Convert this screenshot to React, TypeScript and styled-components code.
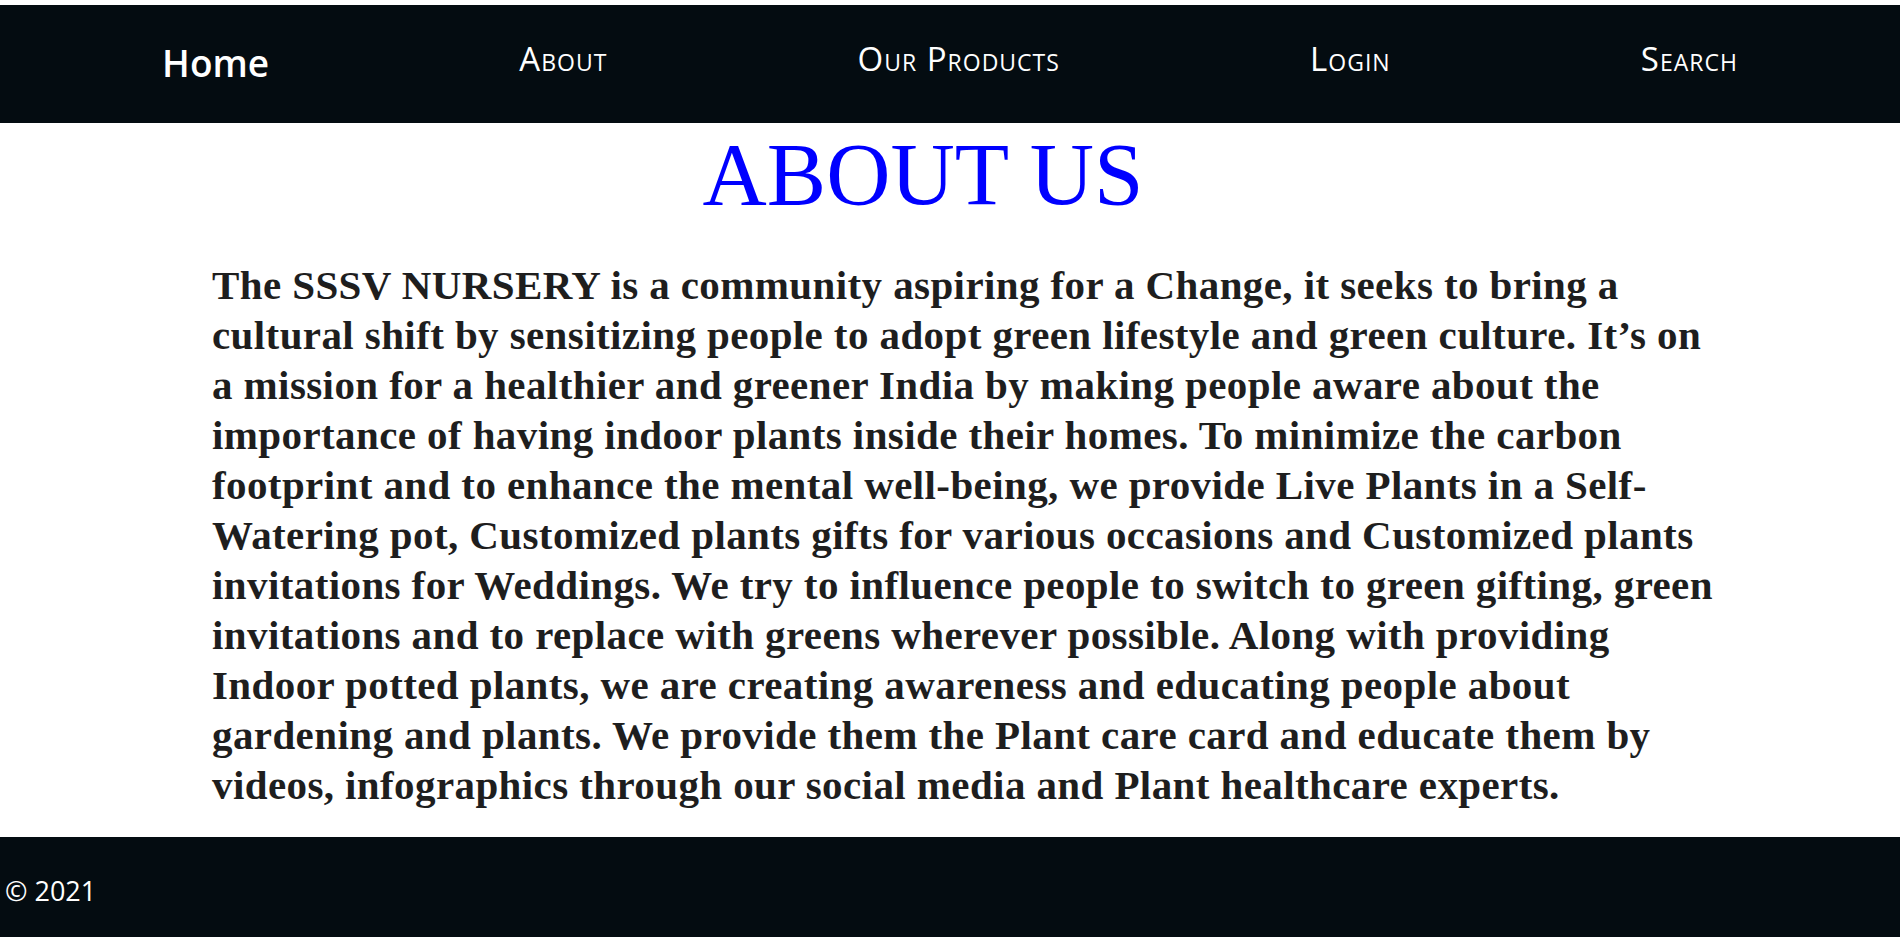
import React from "react";
import styled, { createGlobalStyle } from "styled-components";

const GlobalStyle = createGlobalStyle`
  html, body {
    margin: 0;
    padding: 0;
    background: #ffffff;
  }
  body {
    font-family: "Liberation Serif", "Times New Roman", serif;
  }
`;

const Page = styled.div`
  display: flex;
  flex-direction: column;
  padding: 5px 2px 6px 0;
`;

const NavBar = styled.nav`
  height: 118px;
  background: #040c11;
  display: flex;
  align-items: center;
  justify-content: space-around;
  padding: 0 37px;
`;

const NavLink = styled.a<{ $brand?: boolean }>`
  color: #ffffff;
  text-decoration: none;
  font-family: "Open Sans", "Noto Sans", sans-serif;
  font-size: ${(p) => (p.$brand ? "37px" : "33px")};
  font-weight: ${(p) => (p.$brand ? 600 : 400)};
  font-variant: ${(p) => (p.$brand ? "normal" : "small-caps")};
  letter-spacing: ${(p) => (p.$brand ? "0" : "1px")};
  white-space: nowrap;
  margin-bottom: ${(p) => (p.$brand ? "4px" : "12px")};
`;

const Heading = styled.h1`
  margin: 0;
  padding-right: 54px;
  text-align: center;
  color: #0000ff;
  font-family: "Liberation Serif", "Times New Roman", serif;
  font-weight: 400;
  font-size: 89px;
  line-height: 103px;
`;

const Body = styled.p`
  margin: 34px 0 27px 212px;
  max-width: 1508px;
  color: #1e1e1e;
  font-family: "Liberation Serif", "Times New Roman", serif;
  font-weight: 700;
  font-size: 41px;
  letter-spacing: 0.4px;
  line-height: 50px;
`;

const Footer = styled.footer`
  height: 100px;
  background: #040c11;
  display: flex;
  align-items: center;
  padding-left: 5px;
`;

const Copy = styled.span`
  color: #ffffff;
  font-family: "Open Sans", "Noto Sans", sans-serif;
  font-size: 27px;
  margin-top: 7px;
`;

const links = ["About", "Our Products", "Login", "Search"];

export default function App() {
  return (
    <Page>
      <GlobalStyle />
      <NavBar>
        <NavLink $brand href="#">Home</NavLink>
        {links.map((l) => (
          <NavLink key={l} href="#">
            {l}
          </NavLink>
        ))}
      </NavBar>
      <Heading>ABOUT US</Heading>
      <Body>
        The SSSV NURSERY is a community aspiring for a Change, it seeks to bring a
        cultural shift by sensitizing people to adopt green lifestyle and green
        culture. It’s on a mission for a healthier and greener India by making
        people aware about the importance of having indoor plants inside their
        homes. To minimize the carbon footprint and to enhance the mental
        well-being, we provide Live Plants in a Self-Watering pot, Customized
        plants gifts for various occasions and Customized plants invitations for
        Weddings. We try to influence people to switch to green gifting, green
        invitations and to replace with greens wherever possible. Along with
        providing Indoor potted plants, we are creating awareness and educating
        people about gardening and plants. We provide them the Plant care card and
        educate them by videos, infographics through our social media and Plant
        healthcare experts.
      </Body>
      <Footer>
        <Copy>© 2021</Copy>
      </Footer>
    </Page>
  );
}
